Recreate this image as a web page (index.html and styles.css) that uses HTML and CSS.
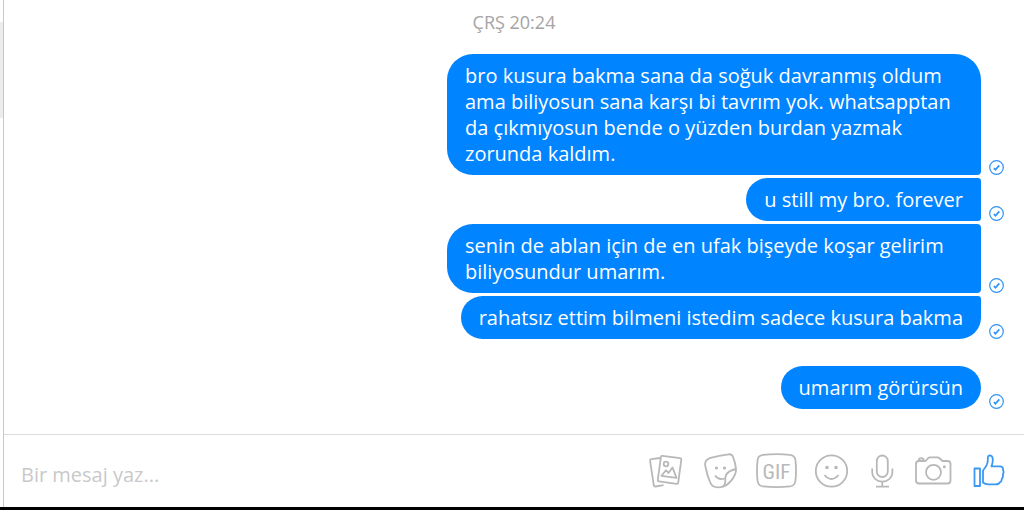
FILE: index.html
```html
<!DOCTYPE html>
<html lang="tr">
<head>
<meta charset="utf-8">
<meta name="viewport" content="width=device-width, initial-scale=1">
<title>Mesajlar</title>
<link rel="stylesheet" href="styles.css">
</head>
<body>
<svg class="defs" width="0" height="0" aria-hidden="true">
  <symbol id="sent" viewBox="0 0 15 15">
    <circle cx="7.5" cy="7.5" r="6.8" fill="none" stroke="#2f93f5" stroke-width="1.2"/>
    <path d="M4.900 8.200l1.500 1.500 3.900-4.300" fill="none" stroke="#2f93f5" stroke-width="1.700"/>
  </symbol>
</svg>
<div class="app">
  <div class="rail"><div class="rail-thumb"></div></div>
  <main class="chat">
    <section class="thread">
      <time class="stamp">ÇRŞ 20:24</time>
      <ol class="messages">
        <li class="message"><p class="bubble bubble-first">bro kusura bakma sana da soğuk davranmış oldum ama biliyosun sana karşı bi tavrım yok. whatsapptan da çıkmıyosun bende o yüzden burdan yazmak zorunda kaldım.</p><svg class="status"><use href="#sent"/></svg></li>
        <li class="message"><p class="bubble bubble-middle">u still my bro. forever</p><svg class="status"><use href="#sent"/></svg></li>
        <li class="message"><p class="bubble bubble-middle">senin de ablan için de en ufak bişeyde koşar gelirim biliyosundur umarım.</p><svg class="status"><use href="#sent"/></svg></li>
        <li class="message"><p class="bubble bubble-last">rahatsız ettim bilmeni istedim sadece kusura bakma</p><svg class="status"><use href="#sent"/></svg></li>
        <li class="message message-apart"><p class="bubble">umarım görürsün</p><svg class="status"><use href="#sent"/></svg></li>
      </ol>
    </section>
    <form class="composer">
      <input class="entry" type="text" placeholder="Bir mesaj yaz..." aria-label="Bir mesaj yaz">
      <div class="tools">
        <button class="tool" type="button" aria-label="Fotoğraf ekle">
          <svg width="37" height="36" viewBox="0 0 37 36"><path d="M11 5L2.300 6.200Q.9 6.400 1.100 7.800L4.800 32.300Q5.100 33.700 6.500 33.500L14.500 32.200"/><path d="M13.500 2.800L31 5.200Q32.500 5.400 32.300 6.900L29.200 29.600Q29 31 27.500 30.800L10 28.400Q8.600 28.200 8.800 26.800L11.900 4.100Q12.100 2.600 13.500 2.800Z"/><circle cx="17" cy="11" r="2.300"/><path d="M12.500 22.800L17 17.200 19.500 20 23.500 14.500 27.500 24.900Z"/></svg>
        </button>
        <button class="tool" type="button" aria-label="Çıkartma">
          <svg width="34" height="36" viewBox="0 0 34 36"><path d="M6.500 4.800Q15 2.600 24.500 1.300Q28 .9 29.200 4.300Q31.500 10 32 16C32.500 22 25.500 33 16.500 34.200C9.500 34.800 7.500 33 5.800 28.500Q3 22 1.200 12.500Q.3 6.700 6.500 4.800Z"/><path d="M32 16Q24.500 17.500 22 22C20 26 23.500 30.500 18.500 34"/><path d="M11 22.500Q15 27.800 20.500 25.500"/><g class="dot"><circle cx="12.500" cy="15" r="1.600"/><circle cx="20.500" cy="15" r="1.600"/></g></svg>
        </button>
        <button class="tool" type="button" aria-label="GIF">
          <svg width="41" height="36" viewBox="0 0 41 36"><path d="M7 1.900Q20.500.2 34 1.900Q38.800 2.500 39.400 7Q40.700 17.500 39.400 28Q38.800 32.800 34 33.400Q20.500 35 7 33.400Q2.200 32.800 1.600 28Q.3 17.500 1.600 7Q2.200 2.500 7 1.900Z"/><text class="gif" x="20.500" y="25.500" text-anchor="middle">GIF</text></svg>
        </button>
        <button class="tool" type="button" aria-label="İfade">
          <svg width="38" height="36" viewBox="0 0 38 36"><circle cx="16.500" cy="18" r="15.700"/><path d="M9.500 22Q16.500 30 23.500 22"/><g class="dot"><circle cx="12" cy="14.500" r="1.800"/><circle cx="21" cy="14.500" r="1.800"/></g></svg>
        </button>
        <button class="tool" type="button" aria-label="Ses kaydı">
          <svg width="26" height="36" viewBox="0 0 26 36"><rect x="5.800" y="2.500" width="11" height="21.500" rx="5.500"/><path d="M1.200 15.500V18.500C1.200 32 21.400 32 21.400 18.500V15.500M11.300 28.700V33.500M5 33.700H18"/></svg>
        </button>
        <button class="tool" type="button" aria-label="Fotoğraf çek">
          <svg width="40" height="36" viewBox="0 0 40 36"><path d="M4 8H10.500L13.500 4.800Q14 4.300 15 4.300H22.500Q23.500 4.300 24.200 5L27.500 8H32.500Q35.500 8 35.500 11V27.500Q35.500 30.500 32.500 30.500H4Q1 30.500 1 27.500V11Q1 8 4 8ZM4 7.500V6Q6 4.500 8.500 6V7.500"/><circle cx="18.500" cy="19.300" r="7.500"/><circle class="dot" cx="29.300" cy="13.700" r="1.500"/></svg>
        </button>
        <button class="tool tool-like" type="button" aria-label="Beğen">
          <svg width="32" height="36" viewBox="0 0 32 36"><path d="M1.500 15.500H7V33H1.500ZM10 29.500V17.500C12.500 14.500 14.500 12 14.800 8V5Q14.800 2.500 17 2.300Q19.500 2.500 19.800 6Q20 9.500 18.500 13.300H27.500Q30.500 13.800 30 17.300Q31.300 19 29.800 21.500Q30.500 24 28.700 26Q28.900 28.600 26.800 29.300Q26 31.300 22.500 31.300H15.500Q12 31.200 10 29.500Z"/></svg>
        </button>
      </div>
    </form>
  </main>
</div>
</body>
</html>
```
FILE: styles.css
```css
* {
  box-sizing: border-box;
}

body {
  margin: 0;
  background: #fff;
  font-family: "Open Sans", "Noto Sans", sans-serif;
}

.defs {
  position: absolute;
}

.app {
  display: flex;
  min-height: 100vh;
  border-bottom: 3px solid #000;
}

.rail {
  flex: none;
  width: 4px;
  padding-top: 22px;
  border-right: 1px solid #c8c8c8;
}

.rail-thumb {
  height: 96px;
  background: #ececec;
}

.chat {
  display: flex;
  flex: 1;
  flex-direction: column;
  min-width: 0;
}

.thread {
  display: flex;
  flex: 1;
  flex-direction: column;
  gap: 20px;
  padding: 10px 20px 24px;
}

.stamp {
  align-self: center;
  color: #a4a4a4;
  font-size: 18px;
  line-height: 24px;
}

.messages {
  display: flex;
  flex-direction: column;
  gap: 3px;
  margin: 0;
  padding: 0;
  list-style: none;
}

.message {
  display: flex;
  align-items: flex-end;
  justify-content: flex-end;
  gap: 8px;
}

.message-apart {
  margin-top: 24px;
}

.bubble {
  max-width: 534px;
  margin: 0;
  padding: 9px 18px 8px;
  border-radius: 26px;
  background: #0084ff;
  color: #fff;
  font-size: 20px;
  line-height: 26px;
}

.bubble-first {
  border-bottom-right-radius: 4px;
}

.bubble-middle {
  border-top-right-radius: 4px;
  border-bottom-right-radius: 4px;
}

.bubble-last {
  border-top-right-radius: 4px;
}

.status {
  flex: none;
  width: 15px;
  height: 15px;
}

.composer {
  display: flex;
  align-items: center;
  gap: 20px;
  padding: 18px 19px 18px 17px;
  border-top: 1px solid #dcdcdc;
}

.entry {
  flex: 1;
  min-width: 0;
  padding: 6px 0 0;
  border: 0;
  outline: 0;
  background: transparent;
  color: #333;
  font: inherit;
  font-size: 20px;
}

.entry::placeholder {
  color: #c9c9c9;
  opacity: 1;
}

.tools {
  display: flex;
  gap: 18px;
}

.tool {
  display: block;
  padding: 0;
  border: 0;
  background: none;
  color: #b8b8b8;
  cursor: pointer;
}

.tool-like {
  color: #3b98f5;
}

.tool svg {
  display: block;
  fill: none;
  stroke: currentColor;
  stroke-width: 1.8;
  stroke-linejoin: round;
}

.tool .dot {
  fill: currentColor;
  stroke: none;
}

.tool .gif {
  fill: currentColor;
  stroke: none;
  font-family: "Roboto Condensed", "Liberation Sans Narrow", Roboto, sans-serif;
  font-size: 21px;
}
```
